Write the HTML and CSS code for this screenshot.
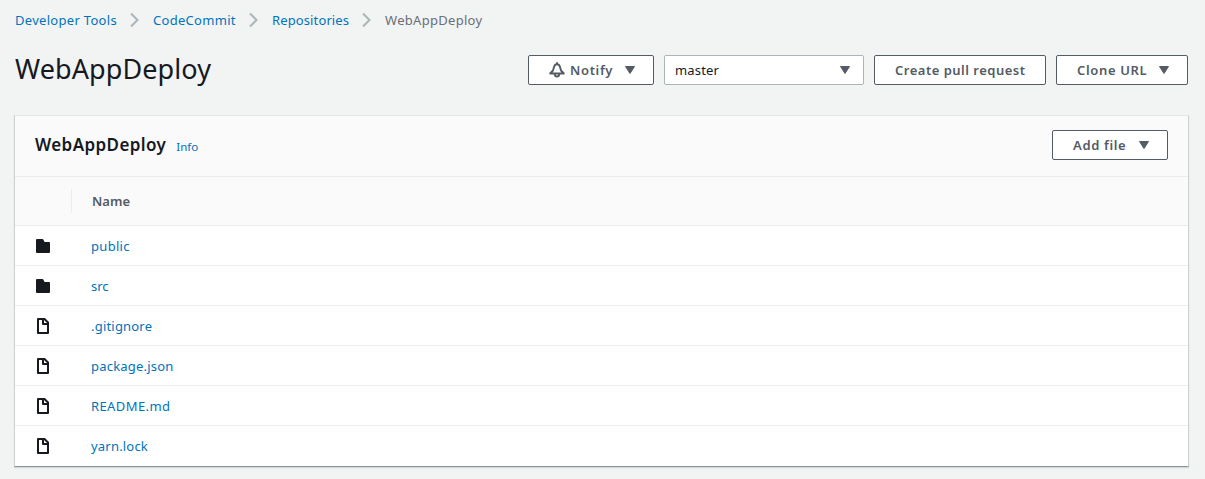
FILE: index.html
```html
<!DOCTYPE html>
<html lang="en">
<head>
<meta charset="utf-8">
<title>WebAppDeploy</title>
<link rel="stylesheet" href="styles.css">
</head>
<body>
<svg class="defs" width="0" height="0" aria-hidden="true">
  <symbol id="chevron" viewBox="0 0 9 16"><path d="M1 1.500 7.500 8 1 14.500" fill="none" stroke="#aab7b8" stroke-width="2"/></symbol>
  <symbol id="caret" viewBox="0 0 10 8"><path d="M.5 .5h9L5 7.500z" fill="#545b64" stroke="#545b64" stroke-linejoin="round"/></symbol>
  <symbol id="bell" viewBox="0 0 16 16"><path d="M1.200 11.500h13.600L12 8.500 11 5C10.500 3.200 9.600 2.300 8 2.300S5.500 3.200 5 5L4 8.500zM8 2.300V.3M5.800 12c0 3.400 4.400 3.400 4.400 0" fill="none" stroke="#545b64" stroke-width="1.900" stroke-linejoin="round"/></symbol>
  <symbol id="folder" viewBox="0 0 14 14"><path d="M1 0h5.500q.5 0 .8.500L8.600 3H13q1 0 1 1v9q0 1-1 1H1q-1 0-1-1V1q0-1 1-1z" fill="#16191f"/></symbol>
  <symbol id="file" viewBox="0 0 12 16"><path d="M1 1h6.500L11 4.500V15H1zM6 1v5h5" fill="none" stroke="#16191f" stroke-width="2" stroke-linejoin="round"/></symbol>
</svg>
<nav class="crumbs">
  <a class="c1">Developer Tools</a><svg class="chev"><use href="#chevron"/></svg>
  <a class="c2">CodeCommit</a><svg class="chev"><use href="#chevron"/></svg>
  <a class="c3">Repositories</a><svg class="chev"><use href="#chevron"/></svg>
  <span class="c4">WebAppDeploy</span>
</nav>
<header class="page-head">
  <h1>WebAppDeploy</h1>
  <div class="actions">
    <button class="btn notify"><svg class="bell"><use href="#bell"/></svg><span>Notify</span><svg class="caret"><use href="#caret"/></svg></button>
    <div class="select"><span>master</span><svg class="caret"><use href="#caret"/></svg></div>
    <button class="btn pull"><span>Create pull request</span></button>
    <button class="btn clone"><span>Clone URL</span><svg class="caret"><use href="#caret"/></svg></button>
  </div>
</header>
<main class="panel">
  <div class="panel-head"><h2>WebAppDeploy</h2><a class="info">Info</a>
    <button class="btn add"><span>Add file</span><svg class="caret"><use href="#caret"/></svg></button>
  </div>
  <div class="cols"><i class="divider"></i><b>Name</b></div>
  <div class="row"><svg class="folder"><use href="#folder"/></svg><a class="r1">public</a></div>
  <div class="row"><svg class="folder"><use href="#folder"/></svg><a class="r2">src</a></div>
  <div class="row"><svg class="file"><use href="#file"/></svg><a class="r3">.gitignore</a></div>
  <div class="row"><svg class="file"><use href="#file"/></svg><a class="r4">package.json</a></div>
  <div class="row"><svg class="file"><use href="#file"/></svg><a class="r5">README.md</a></div>
  <div class="row"><svg class="file"><use href="#file"/></svg><a class="r6">yarn.lock</a></div>
</main>
</body>
</html>
```
FILE: styles.css
```css
* { box-sizing: border-box; }
body { margin: 0; height: 479px; overflow: hidden; background: #f2f3f3; color: #16191f; font: 13px/20px "Noto Sans", sans-serif; }
.defs { position: absolute; }
svg { display: block; flex: none; }
a { color: #0073bb; white-space: nowrap; }
h1, h2 { margin: 0; }
.crumbs { display: flex; align-items: center; height: 40px; padding-left: 15px; color: #687078; letter-spacing: .3px; }
.crumbs a { flex: none; }
.c1 { width: 115px; }
.c2, .c3 { margin-left: 14px; }
.c2 { width: 96px; }
.c3 { width: 90px; letter-spacing: .12px; }
.c4 { margin-left: 14px; }
.chev { width: 9px; height: 16px; }
.page-head { display: flex; justify-content: space-between; height: 60px; padding: 0 17px 0 15px; align-items: center; }
h1 { font-size: 27px; line-height: 36px; font-weight: 400; letter-spacing: .1px; padding-bottom: 2px; }
.actions { display: flex; gap: 10px; }
.btn { display: flex; align-items: center; height: 30px; padding: 0 20px; border: 1px solid #545b64; border-radius: 2px; background: #fff; color: #545b64; font: 600 13px/20px "Noto Sans", sans-serif; letter-spacing: .65px; white-space: nowrap; }
.caret { width: 10px; height: 8px; margin-left: auto; }
.bell { width: 16px; height: 16px; margin-right: 5px; }
.notify { width: 126px; padding: 0 18px 0 20px; }
.select { display: flex; align-items: center; width: 200px; height: 30px; padding: 0 13px 0 10px; border: 1px solid #aab7b8; border-radius: 2px; background: #fff; letter-spacing: .15px; }
.pull { width: 172px; letter-spacing: .5px; }
.clone { width: 132px; padding-right: 18px; }
.add { width: 116px; margin-left: auto; padding-right: 18px; }
.panel { width: 1175px; margin: 15px 0 0 14px; background: #fff; border: 1px solid; border-color: #e4e8e9 #ccd2d3 #87979a #ccd2d3; box-shadow: 0 1px 1px #001c2420; }
.panel-head { display: flex; align-items: center; height: 61px; padding: 0 20px 2px 20px; background: #fafafa; border-bottom: 1px solid #eaeded; }
h2 { font-size: 17px; line-height: 24px; font-weight: 600; letter-spacing: .4px; }
.info { margin: 4px 0 0 10px; font-size: 11.5px; }
.cols { display: flex; align-items: center; height: 49px; background: #fafafa; border-bottom: 1px solid #eaeded; color: #545b64; }
.divider { width: 1px; height: 24px; margin: 0 20px 0 56px; background: #eaeded; }
.cols b { font-weight: 600; }
.row { display: flex; align-items: center; height: 40px; padding-left: 21px; border-bottom: 1px solid #eaeded; letter-spacing: .2px; }
.row:last-child { border-bottom-color: #fff; }
.r1 { letter-spacing: .3px; }
.r2 { letter-spacing: 0; }
.r5 { letter-spacing: .4px; }
.folder { width: 14px; height: 14px; margin-right: 41px; }
.file { width: 12px; height: 16px; margin: 0 42px 0 1px; }
```
